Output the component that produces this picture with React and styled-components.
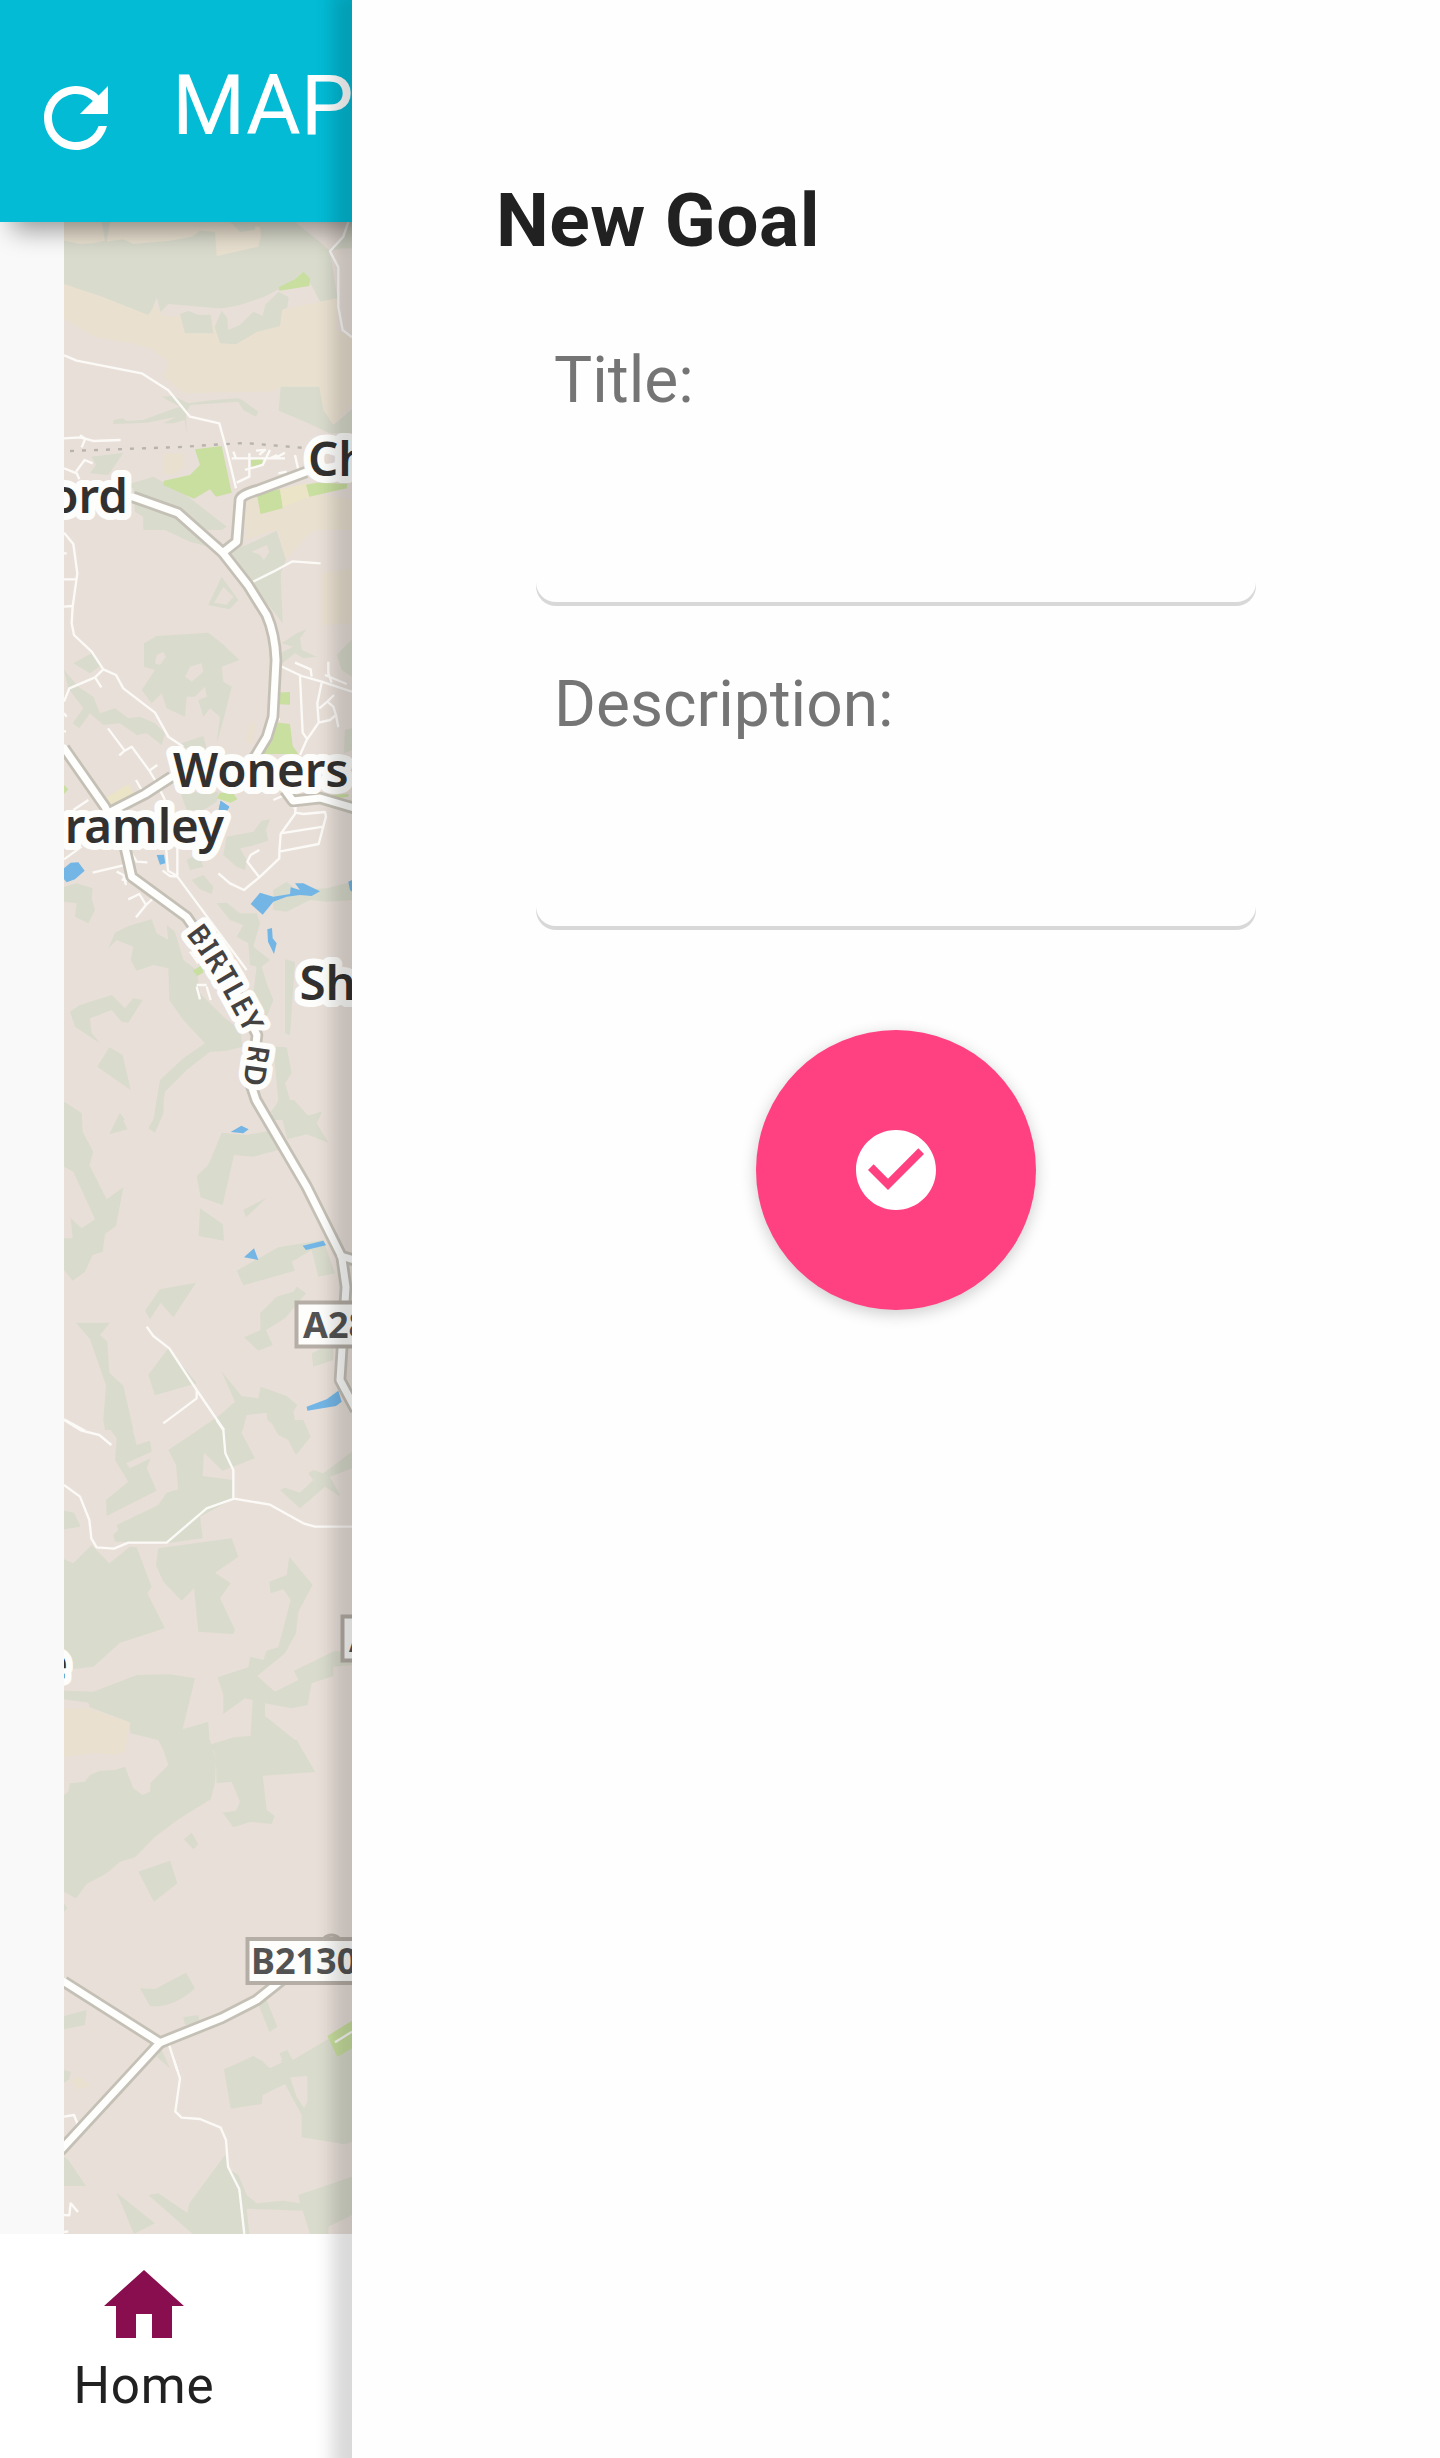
import React from "react";
import styled, { createGlobalStyle } from "styled-components";

const GlobalStyle = createGlobalStyle`
  * { box-sizing: border-box; }
  html, body { margin: 0; padding: 0; }
  body { font-family: Roboto, "Liberation Sans", sans-serif; background: #fafafa; color: #212121; }
`;

const Screen = styled.div`
  position: relative;
  width: 1440px;
  height: 2458px;
  overflow: hidden;
`;

const Page = styled.div`
  display: flex;
  flex-direction: column;
  height: 100%;
`;

const Toolbar = styled.header`
  display: flex;
  align-items: flex-start;
  gap: 48px;
  height: 222px;
  padding: 0 28px;
  background: #03bbd5;
  color: #fff;
  box-shadow: 0 20px 24px -12px rgba(0, 0, 0, 0.4);
  z-index: 1;
`;

const ToolbarTitle = styled.h1`
  margin: 56px 0 0;
  font-size: 84px;
  font-weight: 400;
  line-height: 100px;
`;

const Icon = styled.svg`
  display: block;
  flex: none;
  width: 96px;
  height: 96px;
  fill: currentColor;
`;

const RefreshButton = styled.button`
  margin: 70px 0 0;
  padding: 0;
  border: 0;
  background: none;
  color: inherit;
`;

const MapArea = styled.main`
  flex: 1;
  padding-left: 64px;
  background: #f9f9f9;
  overflow: hidden;
`;

const MapCanvas = styled.svg`
  display: block;
  width: 288px;
  height: 2012px;
  background: #e8dfd8;
`;

const BottomNav = styled.nav`
  display: flex;
  height: 224px;
  background: #fff;
`;

const NavItem = styled.a`
  display: flex;
  flex-direction: column;
  align-items: center;
  width: 288px;
  padding-top: 24px;
  color: #212121;
`;

const NavIcon = styled(Icon)`
  color: #880e4f;
`;

const NavLabel = styled.span`
  font-size: 51.2px;
  line-height: 60px;
  letter-spacing: 0.8px;
  margin-top: 2px;
`;

const Drawer = styled.aside`
  position: absolute;
  top: 0;
  right: 0;
  width: 1088px;
  height: 100%;
  padding: 177px 184px 0 144px;
  background: #fefefe;
  box-shadow: -8px 4px 16px 12px rgba(0, 0, 0, 0.15);
  z-index: 2;
`;

const DrawerTitle = styled.h3`
  margin: 0 0 67px;
  font-size: 74.88px;
  line-height: 88px;
  font-weight: 700;
  letter-spacing: 0.5px;
`;

const Form = styled.form`
  display: flex;
  flex-direction: column;
  padding-left: 40px;
`;

const Field = styled.label`
  display: flex;
  flex-direction: column;
  gap: 43px;
  height: 324px;
  padding-top: 11px;
`;

const FieldLabel = styled.span`
  padding-left: 18px;
  font-size: 64px;
  line-height: 76px;
  color: #757575;
`;

const TextInput = styled.input`
  width: 720px;
  height: 144px;
  padding: 0 20px;
  border: 0;
  border-radius: 20px;
  outline: none;
  background: #fefefe;
  box-shadow: inset 0 -4px 0 rgba(0, 0, 0, 0.15);
  font: 400 64px Roboto, sans-serif;
`;

const SubmitButton = styled.button`
  display: flex;
  align-items: center;
  justify-content: center;
  align-self: center;
  width: 280px;
  height: 280px;
  margin-top: 50px;
  padding: 0;
  border: 0;
  border-radius: 50%;
  background: #ff4081;
  color: #fff;
  box-shadow: 0 4px 16px rgba(0, 0, 0, 0.2);
`;

const PlaceName = styled.text`
  font: 600 47.5px "Noto Sans", "Open Sans", sans-serif;
  fill: #33312f;
  stroke: #fdfdfb;
  stroke-width: 14px;
  stroke-linejoin: round;
  paint-order: stroke;
`;

const StreetName = styled(PlaceName)`
  font-size: 89px;
  fill: #444240;
  stroke-width: 36px;
`;

const ShieldText = styled.text`
  font: 700 36px "Noto Sans", "Open Sans", sans-serif;
  fill: #535353;
`;

const AREA_FILL = {
  wood: "#d9dbcd",
  heath: "#e9e0d0",
  park: "#c8df9f",
  field: "#ebe4c6",
  water: "#73b6e6",
  ground: "#e8dfd8",
};

// Each section of the map is drawn in thirds of a pixel from its own origin.
const SECTIONS = [
  {
    x: 40, y: 210,
    areas: [
      ["wood", "M72 36H936V270L885 268 842 278 808 215 790 185 765 208 716 238 655 270 600 288 545 295 440 290 385 282 362 306 350 262 330 318 270 300 190 262 72 224Z"],
      ["heath", "M72 36H185L195 92 160 100 120 102 72 92ZM210 36H575L530 66 480 62 455 80 385 93 280 102 250 88 200 95Z"],
      ["heath", "M525 64L572 40 660 50 663 78 655 110 530 138Z"],
      ["wood", "M572 36H650L643 60 600 66Z"],
      ["ground", "M765 36H920L912 80 870 124 835 92Z"],
      ["ground", "M870 124L905 115H940V480L915 470 890 420 895 280Z"],
      ["ground", "M716 245L808 215 842 278 720 305Z"],
      ["heath", "M72 222L190 262 325 315 345 285 370 320 440 305 560 300 720 300 890 265V360L936 380V580L880 645 850 600 838 530 720 532 700 544 430 550 370 500 385 455 330 415 270 400 160 380 72 325Z"],
      ["heath", "M370 730H430L432 770 400 795 372 790Z"],
      ["ground", "M362 308L385 282 430 286 545 296 600 285 720 245 725 298 640 345 560 360 520 345 515 315 440 312 400 320Z"],
      ["wood", "M420 312L445 303 475 314 512 314 520 370 435 370Z"],
      ["wood", "M524 350L545 302 562 325 564 360 600 345 640 305 668 318 676 284 716 245 746 262 742 292 726 300 720 348 650 366 588 403 540 400Z"],
      ["wood", "M722 530H838L850 600 880 645 936 598V670H870L795 635 716 602Z"],
      ["park", "M716 232L765 208 790 185 810 205 808 228 718 242Z"],
      ["wood", "M220 630L248 625 260 633 310 630 390 600 420 590 365 560 400 558 445 580 520 570 595 565 610 572 655 605 648 620 610 600 595 575 450 585 438 610 440 675 434 630 400 640 370 640 410 620 320 638 220 642Z"],
      ["wood", "M155 740L250 728 205 795 150 790 168 765Z"],
      ["wood", "M240 830L340 800 430 850 470 880 560 950 545 960H310V920L285 905 280 835Z"],
      ["park", "M465 718L545 708 575 848 528 860 510 838 462 866 370 825 372 812 450 795 480 765Z"],
      ["heath", "M620 870L650 850 820 850 936 870V960H615Z"],
      ["park", "M650 852L720 838 728 892 662 912Z"],
      ["field", "M720 838L800 820 808 860 728 892Z"],
      ["park", "M798 824L830 818 922 822 920 835 808 860Z"],
      ["park", "M632 750L665 745 670 760 635 772Z"],
    ],
    lanes: [
      "M925 36L910 80 870 124 895 172V290L908 360 936 382",
      "M72 436L110 452 305 490 385 541 450 620 538 640 560 720 588 835",
      "M72 685L120 682 160 693 242 690M120 676L136 686 125 712",
      "M72 775L110 790 118 808M108 785L134 750 158 760",
      "M580 725L588 745H690L712 735M575 745H735M648 722L675 720 658 735M628 730V800L590 818M690 720L668 765 615 780M765 735L775 780M705 745L735 728M715 790L740 785",
    ],
  },
  {
    x: 40, y: 500,
    areas: [
      ["wood", "M310 30L400 45 460 70 548 130 520 145 450 125 370 88 310 80Z"],
      ["heath", "M725 20L936 0V40L868 60 800 110 738 180 715 92 690 95 615 120 630 50Z"],
      ["park", "M655 -10L722 -14 728 25 662 42Z"],
      ["wood", "M555 155L620 135 710 92 738 180 722 220 728 370 690 320 620 245Z"],
      ["ground", "M635 155L680 135 688 155 672 180 660 165Z"],
      ["wood", "M545 230L595 300 568 328 505 315Z"],
      ["ground", "M550 260L522 308 560 314 580 290Z"],
      ["wood", "M312 430L350 408 505 398 545 430 598 480 545 500 550 545 575 560 550 660 530 730 540 650 510 625 490 650 475 600 500 590 495 560 465 590 440 590 435 650 380 625 365 580 335 610 305 570 345 510 312 500Z"],
      ["ground", "M350 465L370 455 378 470 360 495 345 490ZM450 500L485 490 490 515 455 545 435 530Z"],
      ["heath", "M845 220L936 205V370L845 375Z"],
      ["wood", "M100 490L155 460 185 495 150 520Z"],
      ["wood", "M72 510L115 560 160 590 180 640 225 625 265 655 300 650 345 670 375 700 365 735 320 700 290 705 240 670 190 675 150 640 118 685 98 670 130 625 85 565Z"],
      ["wood", "M425 730L490 708 500 745H430Z"],
      ["wood", "M725 430L770 400 800 388 780 415 785 450 830 470 790 475 765 460 720 495 700 470 760 440Z"],
      ["wood", "M890 465L936 418V530L905 510ZM915 690L936 685V750L912 760Z"],
      ["park", "M705 578L750 576V614L705 612Z"],
      ["park", "M715 668L750 672 758 738 775 762H665L695 700Z"],
      ["heath", "M630 675L645 665 640 735 615 720Z"],
      ["field", "M195 895L265 853 282 882 240 918 205 930Z"],
      ["wood", "M422 878L535 875 530 905 490 930H440Z"],
      ["park", "M540 878L580 880 592 898 572 908 530 895ZM875 885L925 882V890L880 895ZM72 855L85 868 72 882Z"],
      ["water", "M542 902L568 920 560 935 536 930Z"],
    ],
    lanes: [
      "M72 98L100 132 112 220 98 320 95 370 102 405 155 455 190 508 228 525 250 565 345 638 385 710 430 740",
      "M190 508L165 532 88 565 72 605M165 532L184 562",
      "M72 238L108 238M72 320L98 318M72 160H80M72 640L80 650M72 694H78",
      "M625 252L700 215 758 184 842 190",
      "M204 685L254 752 238 766M254 752L275 740 328 812 352 795M328 812L345 840 375 900M288 840L305 870",
      "M715 495L785 528 845 545 936 575M780 528L788 698 800 715M765 488L812 508 815 530M845 548L832 610 836 668 800 720 780 765M836 668L870 660 888 645 880 620 862 605 838 625M862 605L882 585M888 645L895 682M865 485V520L875 548M855 525L920 552",
      "M100 930L145 900M700 655L720 658M700 900L735 885",
    ],
  },
  {
    x: 40, y: 800,
    areas: [
      ["water", "M542 2L568 20 560 32 536 28ZM350 165L372 164 376 190 360 194ZM72 205L92 188 115 187 134 212 105 238 80 247 72 238Z"],
      ["wood", "M560 110L640 95 665 62 690 58 678 90 685 122 635 138 600 145 620 180 615 210 590 200 550 165Z"],
      ["wood", "M440 180L475 160 490 200 450 210ZM455 240L490 225 520 260 515 282 480 268Z"],
      ["wood", "M530 310L560 308 600 340 650 340 660 370 640 440 690 480 665 500 680 550 700 600 680 650 640 580 650 500 630 495 625 430 590 410 610 375 570 360Z"],
      ["wood", "M700 270L740 245 770 270 860 265 936 245V300L860 305 810 300 740 335 700 330Z"],
      ["water", "M632 312L660 278 700 290 750 282 752 262 780 270 765 250 790 250 840 274 815 288 780 285 740 290 700 305 668 344ZM682 388L696 384 698 415 710 430 702 462 684 425ZM925 245L936 240V275L930 270Z"],
      ["wood", "M735 478L765 485 750 705 735 700Z"],
      ["wood", "M72 260L110 250 158 265 155 295 165 330 145 370 105 350 110 310 72 305Z"],
      ["wood", "M205 445L225 398 265 378 335 358 350 400 385 420 380 375 405 395 430 480 470 510 480 580 550 650 600 690 608 740 560 752 510 755 440 810 375 875 362 960H340L360 840 430 775 495 730 430 660 388 600 385 505 340 495 290 512 272 480 280 440 230 420Z"],
      ["wood", "M90 635L120 615 215 585 255 625 280 595 308 600 265 668 245 665 215 630 150 655 155 700 180 730 105 680Z"],
      ["wood", "M208 742L248 765 272 870 172 800Z"],
      ["wood", "M700 740L740 742 755 820 735 850 750 900 775 930 790 950 845 935 830 960H690L715 900Z"],
      ["wood", "M72 905L125 940V960H72ZM240 940L255 960H230Z"],
      ["park", "M458 512L486 495 490 518 472 528Z"],
    ],
    lanes: [
      "M72 178L125 140M158 218L250 196M275 160L290 185 322 187M230 215L250 225 258 255M245 238L262 242",
      "M378 140L384 212 412 228V140M368 212L390 228 412 230 620 510",
      "M265 298L298 282 318 315 345 290M318 315L288 352",
      "M768 10L765 42 722 102 718 155 836 132 858 50 855 36 790 42 765 38M722 100L850 80M718 155V175L658 232 612 270 570 250 535 220M658 232L622 185 632 165 658 150M740 0L765 25",
      "M470 555H500M470 560L480 598M500 560L512 600M450 455L475 490",
    ],
  },
  {
    x: 40, y: 1100,
    areas: [
      ["wood", "M72 8L125 40 128 95 160 155 148 195 200 298 250 262 228 378 195 402 188 455 158 465 135 515 98 542 72 510V415H98L92 355 125 385 165 358 100 215 72 200Z"],
      ["wood", "M240 38L262 88 208 103ZM350 0H370V40L345 98 325 85 348 45Z"],
      ["wood", "M545 98L620 105 690 92 715 150 640 170 582 165 548 315 482 292 470 228 505 195Z"],
      ["wood", "M480 325L548 372 552 422 476 408ZM610 330L680 293 618 352Z"],
      ["wood", "M690 38L720 0H762L805 48 845 38 830 70 865 128 800 103 742 118 722 40Z"],
      ["wood", "M590 512L715 442 850 420 885 520 835 530 815 450 755 485 765 512 610 556Z"],
      ["wood", "M315 632L360 568 468 548 400 652 362 608 330 658Z"],
      ["wood", "M108 668H210L180 705 202 725 208 818 250 858 280 990H195L190 960 198 855 150 718Z"],
      ["wood", "M385 745L470 850 345 886 325 825Z"],
      ["wood", "M660 640L710 590 760 575 770 560 798 580 735 655 678 690 698 735 655 752 612 712 662 690Z"],
      ["wood", "M815 760L880 728V780L820 800Z"],
      ["wood", "M545 815L605 888 655 895 662 860 740 888 772 915 760 935 765 960 790 970 800 990H720L682 960 680 938 620 945 608 990H475L540 945 585 905Z"],
      ["water", "M572 96L604 77 626 88 610 100ZM788 437L850 422 858 436 798 450ZM612 472L642 445 655 480ZM800 920L860 898 895 872 905 905 888 918 802 932Z"],
    ],
    lanes: ["M320 680L340 708 388 745 470 870 552 990M470 870V895L370 970", "M72 958L135 992"],
  },
  {
    x: 40, y: 1420,
    areas: [
      ["wood", "M190 0H270L290 75 330 62 335 95 258 130 270 145 332 115 320 145 350 212 200 288 198 240 265 185 225 120 230 55Z"],
      ["wood", "M385 90L520 0H615L605 40 645 115 548 152 492 98 488 168 578 180 582 235 480 290 488 355 380 370 225 365 220 345 235 330 230 315 355 255 380 218 415 208 408 135Z"],
      ["wood", "M72 272L102 278 122 320 72 328Z"],
      ["wood", "M72 418L100 430 155 375 208 430 270 380 290 382 335 500 322 520 375 625 240 668 160 740 72 750V640L72 620Z"],
      ["wood", "M355 385L575 355 595 410 525 458 572 490 540 535 585 630 580 642 475 635 462 505 425 542 370 485 348 435Z"],
      ["wood", "M715 45L690 0H790L812 50 768 105 745 60Z"],
      ["wood", "M720 210L735 203 780 218 820 180 805 160 820 150 850 160 936 95V145L870 170 902 230 855 200 780 265Z"],
      ["wood", "M748 410L818 495 775 575 768 640 735 700 652 768 705 815 775 780 762 752 885 692 936 700V735L880 740V768L815 790 803 855 755 865 675 850V888L765 960 785 990H520L505 975 582 952 632 948 638 840 615 835 550 882V825L533 772 625 742 630 710 670 720 680 692 715 682 752 540 730 508 692 520 688 485 740 465Z"],
      ["wood", "M72 812L160 815 290 765 390 763 465 775 428 928 505 905 510 990H370L362 962 272 940 265 905 150 862 145 848 72 838Z"],
      ["heath", "M72 865H145L272 908 250 990 72 1010Z"],
    ],
    lanes: ["M72 0L125 32 178 45 214 75", "M72 195L120 230 148 300 154 355 170 382 222 386 265 368H380L500 265 582 236 690 254 790 310 825 320H936M530 0L550 30 556 100 580 150V236"],
  },
  {
    x: 40, y: 1740,
    areas: [
      ["heath", "M72 0H260L255 35 230 45 140 38 72 30Z"],
      ["wood", "M72 165L85 155 90 130 135 125 150 105 180 92 225 90 255 80 280 145 308 165 330 155 332 128 385 75 370 30 355 0H510L528 60 525 130 512 178 420 235 345 290 285 352 240 365 200 400 140 432 108 475 72 455ZM72 490L82 505 72 515Z"],
      ["wood", "M518 15L555 28 580 0H770L826 96 668 107 680 210 704 228 695 252 630 246 580 262 548 218 588 212 600 185 575 125 530 130 528 60Z"],
      ["wood", "M455 278L475 312 460 328 432 298ZM295 395L390 362 412 430 342 485Z"],
      ["wood", "M300 745L345 747 438 698 465 745Q400 805 330 798Z"],
      ["wood", "M72 828L140 810 135 855 72 868ZM430 832L475 825 480 850 435 855ZM655 792L680 780 712 860 688 876Z"],
      ["wood", "M550 990L640 948 660 960 690 985 730 965 718 940 742 930 758 960 860 900 936 860V990ZM390 985L365 930 350 950"],
      ["park", "M862 888L936 842V925L892 950Z"],
    ],
    lanes: ["M385 908L412 992M885 907L936 875"],
  },
  {
    x: 0, y: 2060,
    areas: [
      ["wood", "M672 28L740 0H785L812 32 850 15 842 0H936V0H1056V245L1035 253 905 232V165L855 72 788 105 785 132 692 146Z"],
      ["ground", "M870 52L922 48V125L912 145 890 110Z"],
      ["wood", "M192 30L212 35 208 58 192 68ZM192 290L205 300 258 378H192ZM350 398L465 490 402 522Z"],
      ["wood", "M445 405L475 400 562 458 568 430 675 285 690 330 715 345 740 405 770 430 850 422 900 430 895 405 1056 350V465L985 500V522H930L908 452 740 446 748 522H578Z"],
      ["heath", "M210 60L235 48 275 78 230 88Z"],
    ],
    lanes: ["M522 0L540 55 526 155 545 173 600 177 662 203 678 240 684 320 718 388 733 522", "M192 170L222 165 232 190 228 210M192 465L208 466 212 430 234 456M192 516L205 514"],
  },
];

const ROADS = [
  "M133 497L178 513 222.7 552.7 248 585 266.7 615Q275 634 276 660L273 717 267 737 255 757 240 770",
  "M171.7 776.7L145 794 108 813",
  "M306 472L258 490Q240 495 240 500L236.7 541.7 222.7 552.7",
  "M64 748L105 806.7 125 847 131.7 876.7 186.7 917 230 980 257 1035 251 1085 256 1100 306.7 1186.7 341.7 1256.7 346 1287 340 1380 356 1410",
  "M285 790L293 801 320 798 354 808",
  "M341 1256L354 1260",
  "M64 1981.7L160 2042.7 221.7 2018 256.7 2000 278 1983 300 1965",
  "M160 2042.7L60 2151",
];

const Section = ({ x, y, children }) => (
  <g transform={`translate(${x} ${y}) scale(0.33333)`}>{children}</g>
);

function Shield({ x, y, textX, children }) {
  return (
    <g>
      <rect x={x + 1.5} y={y + 1.5} width="120" height="44" fill="#fdfdfc" stroke="#b5aea6" strokeWidth="4" />
      <ShieldText x={textX} y={y + 36.5}>{children}</ShieldText>
    </g>
  );
}

function TerrainMap() {
  return (
    <MapCanvas viewBox="64 222 288 2012" role="img" aria-label="Map">
      {SECTIONS.map((s) => (
        <Section key={s.y} x={s.x} y={s.y}>
          {s.areas.map(([kind, d], i) => (
            <path key={i} d={d} fill={AREA_FILL[kind]} />
          ))}
        </Section>
      ))}
      <path d="M70 451L125 449 180 447 210 445 245 443 305 448" fill="none" stroke="#b9b3ae" strokeWidth="2.4" strokeDasharray="4 8" />
      {SECTIONS.map((s) => (
        <Section key={s.y} x={s.x} y={s.y}>
          {s.lanes.map((d, i) => (
            <path key={i} d={d} fill="none" stroke="#fcfaf7" strokeWidth="7" strokeLinejoin="round" />
          ))}
        </Section>
      ))}
      <g fill="none" strokeLinejoin="round">
        {ROADS.map((d) => <path key={d} d={d} stroke="#c4c0b6" strokeWidth="12.5" />)}
        {ROADS.map((d) => <path key={d} d={d} stroke="#fefefc" strokeWidth="7" strokeLinecap="round" />)}
      </g>
      <circle cx="331.5" cy="1946" r="11" fill="#d9dbcd" stroke="#b5aea6" strokeWidth="3" />
      <PlaceName x="128" y="512.5" textAnchor="end">ord</PlaceName>
      <PlaceName x="308" y="476">Ch</PlaceName>
      <PlaceName x="173" y="786.5">Woners</PlaceName>
      <PlaceName x="224" y="842.5" textAnchor="end">ramley</PlaceName>
      <PlaceName x="299.5" y="1000">Sh</PlaceName>
      <PlaceName x="68" y="1680" textAnchor="end">e</PlaceName>
      <Section x={40} y={800}>
        <path id="birtley" d="M436 402Q515 500 626 720" fill="none" />
        <path id="birtley-end" d="M627 732L605 880" fill="none" />
        <StreetName><textPath href="#birtley">BIRTLEY</textPath></StreetName>
        <StreetName><textPath href="#birtley-end">RD</textPath></StreetName>
      </Section>
      <Shield x={295} y={1301} textX={303}>A28</Shield>
      <Shield x={341} y={1615} textX={349}>A</Shield>
      <Shield x={246} y={1937.5} textX={251}>B2130</Shield>
    </MapCanvas>
  );
}

export default function App() {
  return (
    <>
      <GlobalStyle />
      <Screen>
        <Page>
          <Toolbar>
            <RefreshButton aria-label="Refresh">
              <Icon viewBox="0 0 24 24">
                <path d="M17.65 6.35C16.2 4.9 14.21 4 12 4c-4.42 0-7.99 3.58-7.99 8s3.57 8 7.99 8c3.73 0 6.84-2.55 7.73-6h-2.08c-.82 2.33-3.04 4-5.65 4-3.31 0-6-2.69-6-6s2.69-6 6-6c1.66 0 3.14.69 4.22 1.78L13 11h7V4l-2.35 2.35z" />
              </Icon>
            </RefreshButton>
            <ToolbarTitle>MAP</ToolbarTitle>
          </Toolbar>
          <MapArea>
            <TerrainMap />
          </MapArea>
          <BottomNav>
            <NavItem>
              <NavIcon viewBox="0 0 24 24">
                <path d="M10 20v-6h4v6h5v-8h3L12 3 2 12h3v8z" />
              </NavIcon>
              <NavLabel>Home</NavLabel>
            </NavItem>
          </BottomNav>
        </Page>
        <Drawer>
          <DrawerTitle>New Goal</DrawerTitle>
          <Form>
            <Field>
              <FieldLabel>Title:</FieldLabel>
              <TextInput />
            </Field>
            <Field>
              <FieldLabel>Description:</FieldLabel>
              <TextInput />
            </Field>
            <SubmitButton type="button" aria-label="Save goal">
              <Icon viewBox="0 0 24 24">
                <path d="M12 2C6.48 2 2 6.48 2 12s4.48 10 10 10 10-4.48 10-10S17.52 2 12 2zm-2 15l-5-5 1.41-1.41L10 14.17l7.59-7.59L19 8l-9 9z" />
              </Icon>
            </SubmitButton>
          </Form>
        </Drawer>
      </Screen>
    </>
  );
}
